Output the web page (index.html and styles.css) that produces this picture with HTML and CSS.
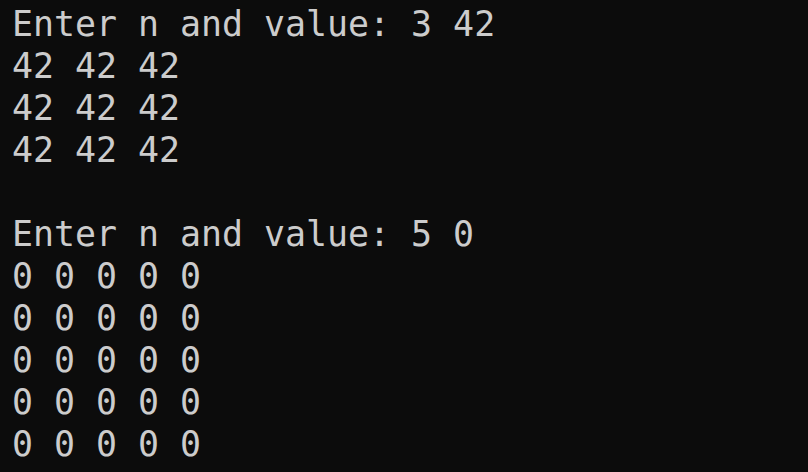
FILE: index.html
```html
<!DOCTYPE html>
<html>
<head>
<meta charset="utf-8">
<link rel="stylesheet" href="styles.css">
</head>
<body>
<pre class="term">Enter n and value: 3 42
42 42 42
42 42 42
42 42 42

Enter n and value: 5 0
0 0 0 0 0
0 0 0 0 0
0 0 0 0 0
0 0 0 0 0
0 0 0 0 0</pre>
</body>
</html>
```

FILE: styles.css
```css
html, body {
  margin: 0;
  padding: 0;
  background: #0c0c0c;
  width: 808px;
  height: 472px;
  overflow: hidden;
}
.term {
  margin: 0;
  padding: 3px 12px;
  font-family: "DejaVu Sans Mono", monospace;
  font-size: 34.9px;
  line-height: 42px;
  color: #cccccc;
}
```
